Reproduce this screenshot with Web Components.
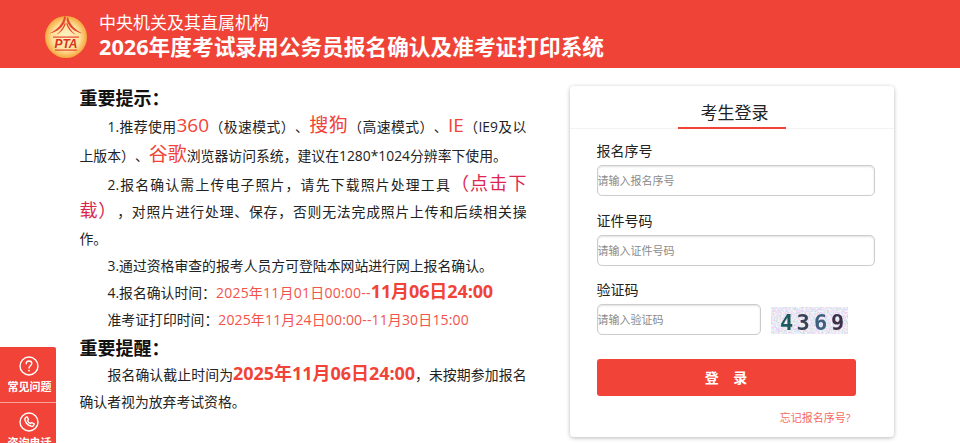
<!DOCTYPE html>
<html lang="zh-CN"><head><meta charset="utf-8"><title>报名确认及准考证打印系统</title>
<style>
html,body{margin:0;height:443px;overflow:hidden;background:#fff}
body{font-family:"Open Sans","Noto Sans CJK SC",sans-serif;color:#222;text-spacing-trim:space-all;font-feature-settings:"palt" 0}
</style></head><body>
<app-header></app-header>
<main-layout><notice-panel></notice-panel><login-card></login-card></main-layout>
<side-rail></side-rail>
<script>
const def=(n,html)=>customElements.define(n,class extends HTMLElement{constructor(){super();this.attachShadow({mode:'open'}).innerHTML=html}});
def('app-header',`<style>
:host{display:flex;align-items:center;height:68px;background:#f04337;color:#fff;padding-left:44px;box-sizing:border-box;gap:11px}
svg{width:44px;height:44px;flex:none;margin-top:5px}
.t{display:flex;flex-direction:column;padding-top:4px}
.a{font-size:17px;line-height:24px;margin-bottom:-2px}
.b{font-size:21.7px;line-height:28px;font-weight:700}
</style>
<svg viewBox="0 0 44 44"><defs><radialGradient id="g" cx=".5" cy=".5" r=".5"><stop offset="0" stop-color="#fff3c4"/><stop offset=".65" stop-color="#fde09a"/><stop offset="1" stop-color="#f7a63d"/></radialGradient></defs>
<circle cx="22" cy="22" r="21" fill="url(#g)"/>
<path d="M20 1.5 C19.5 8 13 15 5.5 18.5 C14 17 20 11 21.5 4.5 L22 1.5 Z M24 1.5 C24.5 8 31 15 38.5 18.5 C30 17 24 11 22.5 4.5 Z" fill="#e8452f"/>
<path d="M21 7 C20 11 17 16 12.5 19.5 C17.5 17.5 20.5 13 21.6 9 Z M23 7 C24 11 27 16 31.5 19.5 C26.5 17.5 23.5 13 22.4 9 Z" fill="#e8452f"/>
<rect x="9" y="21.5" width="26" height="1.2" fill="#e8452f"/>
<text x="22" y="32.5" text-anchor="middle" font-family="Liberation Sans" font-size="12.5" font-weight="700" font-style="italic" fill="#d9301f" textLength="23" lengthAdjust="spacingAndGlyphs">PTA</text>
<rect x="11" y="34.5" width="22" height="1.2" fill="#e8452f"/></svg>
<div class="t"><div class="a">中央机关及其直属机构</div><div class="b">2026年度考试录用公务员报名确认及准考证打印系统</div></div>`);
def('main-layout',`<style>:host{display:flex;padding:18px 0 0 80px;gap:43px;align-items:flex-start}</style><slot></slot>`);
def('notice-panel',`<style>
:host{display:block;width:447px;font-size:13.85px;color:#222;text-align:justify;margin:-1px 0 0 -.5px;text-spacing-trim:space-all}
h3{margin:0;font-size:18px;line-height:26px;font-weight:700;color:#111}
h3.two{margin-top:2px}
p{margin:0;text-indent:28px;line-height:27px}
p.a{line-height:29px;margin-top:1px}
p.b{margin-top:1px}
.r{color:#f14337}.l{font-size:19px;line-height:1}
.k{color:#dc2650;font-size:18px;line-height:1}
.d{color:#f4534a;font-size:14px;letter-spacing:.22px}.d.e{letter-spacing:.14px}.s{color:#f14337;font-size:18px;font-weight:700;line-height:1;letter-spacing:-.1px}
</style>
<h3>重要提示：</h3>
<p class="a">1.推荐使用<span class="r l">360</span>（极速模式）、<span class="r l">搜狗</span>（高速模式）、<span class="r l">IE</span>（IE9及以上版本）、<span class="r l">谷歌</span>浏览器访问系统，建议在1280*1024分辨率下使用。</p>
<p class="b">2.报名确认需上传电子照片，请先下载照片处理工具<span class="k">（点击下载）</span>，对照片进行处理、保存，否则无法完成照片上传和后续相关操作。</p>
<p>3.通过资格审查的报考人员方可登陆本网站进行网上报名确认。</p>
<p>4.报名确认时间：<span class="d">2025年11月01日00:00--</span><span class="s">11月06日24:00</span></p>
<p>准考证打印时间：<span class="d e">2025年11月24日00:00--11月30日15:00</span></p>
<h3 class="two">重要提醒：</h3>
<p>报名确认截止时间为<span class="s">2025年11月06日24:00</span>，未按期参加报名确认者视为放弃考试资格。</p>`);
def('form-field',`<style>
:host{display:block;width:279px;margin-bottom:14.5px}
label{display:block;font-size:14px;line-height:20px;color:#222;margin-bottom:4px}
.row{display:flex;align-items:flex-start}
input{box-sizing:border-box;height:31px;width:278px;border:1px solid #ccc;border-radius:5px;box-shadow:inset 0 1px 2px rgba(0,0,0,.12);padding:0;font:11px "Open Sans","Noto Sans CJK SC",sans-serif;outline:0;background:#fff}
input::placeholder{color:#8a8a8a;opacity:1}
:host([short]) input{width:164px}
</style><label></label><div class="row"><input><slot></slot></div>`);
def('captcha-img',`<style>
:host{display:block;width:77px;height:27px;margin:3px 0 0 10px}
svg{display:block;width:77px;height:27px}
</style><svg viewBox="0 0 77 27"><defs><filter id="n" x="0" y="0" width="1" height="1"><feTurbulence type="fractalNoise" baseFrequency=".55" numOctaves="2" seed="4"/><feColorMatrix values=".8 0 0 0 .42  0 .8 0 0 .4  0 0 .7 0 .55  0 0 0 0 1"/></filter></defs>
<rect width="77" height="27" filter="url(#n)"/>
<g font-family="DejaVu Sans Mono" font-size="22" font-weight="700" style="filter:blur(.4px)"><text x="9" y="23" fill="#1d5a5c">4</text><text x="25.5" y="23" fill="#3a4256">3</text><text x="43" y="23" fill="#3f5f80">6</text><text x="60" y="23" fill="#3d2f48">9</text></g></svg>`);
def('login-card',`<style>
:host{display:block;box-sizing:border-box;width:324px;height:351px;background:#fff;border-radius:4px;box-shadow:0 1px 4px rgba(0,0,0,.28)}
.h{height:42px;border-bottom:1px solid #f3f3f3;display:flex;justify-content:center;font-size:17px;color:#222}
.h span{display:block;width:108px;height:43px;text-align:center;border-bottom:2px solid #f14337;box-sizing:border-box;line-height:54px;padding-left:6px}
.f{padding:12px 0 0 27px}
button{display:block;width:259px;height:37px;border:0;border-radius:3px;background:#f14337;color:#fff;font:700 14px "Open Sans","Noto Sans CJK SC",sans-serif;margin:23.5px 0 0;padding:0;white-space:pre}
a{display:block;width:254px;text-align:right;margin-top:14px;font-size:11px;line-height:16px;color:#f4695f;text-decoration:none}
</style>
<div class="h"><span>考生登录</span></div>
<div class="f">
<form-field id="a"></form-field><form-field id="b"></form-field>
<form-field id="c" short><captcha-img></captcha-img></form-field>
<button>登    录</button><a href="#">忘记报名序号?</a></div>`);
def('side-rail',`<style>
:host{position:fixed;left:0;top:347px;width:56px;height:110px;background:#f14337;color:#fff;font-size:11px;font-weight:600;text-align:center;border-radius:0 2px 0 0}
div{height:55px;box-sizing:border-box;padding:9px 0 0 3px;line-height:16px}
div+div{border-top:1px solid #f9a29b}
svg{display:block;width:20px;height:20px;margin:0 auto 3px;position:relative;left:-1px;fill:none;stroke:#fff;stroke-width:1.4}
</style>
<div><svg viewBox="0 0 20 20"><circle cx="10" cy="10" r="9"/><path d="M7.2 7.8C7.2 6 8.5 5 10 5s2.8 1 2.8 2.6c0 2-2.8 2.3-2.8 4.4" stroke-linecap="round"/><circle cx="10" cy="14.6" r=".9" fill="#fff" stroke="none"/></svg>常见问题</div>
<div><svg viewBox="0 0 20 20"><circle cx="10" cy="10" r="9"/><path d="M6.6 5.4l1.5-.6 1.4 2.6-1 1c.5 1.4 1.7 2.6 3.1 3.1l1-1 2.6 1.4-.6 1.5c-.4.8-1.3 1.1-2.2.9-3-.8-5.7-3.5-6.5-6.5-.2-.9.1-1.8.7-2.4z" stroke-linejoin="round"/></svg>咨询电话</div>`);
const cfg={a:['报名序号','请输入报名序号'],b:['证件号码','请输入证件号码'],c:['验证码','请输入验证码']};
const card=document.querySelector('login-card').shadowRoot;
for(const k in cfg){const f=card.getElementById(k);f.shadowRoot.querySelector('label').textContent=cfg[k][0];f.shadowRoot.querySelector('input').placeholder=cfg[k][1];}
</script>
</body></html>
